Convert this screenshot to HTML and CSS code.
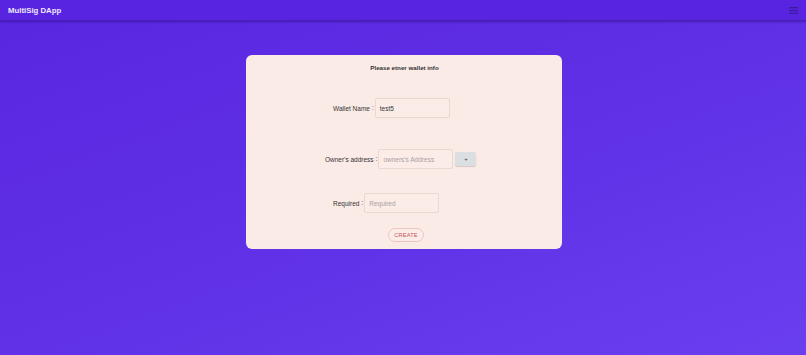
FILE: index.html
```html
<!DOCTYPE html>
<html>
<head>
<meta charset="utf-8">
<link rel="stylesheet" href="styles.css">
</head>
<body>
<header class="topbar">
  <div class="brand">MultiSig DApp</div>
  <svg class="menu" width="9" height="7" viewBox="0 0 9 7"><rect x="0" y="0" width="9" height="1.3" fill="#3b1c9c"/><rect x="0" y="2.85" width="9" height="1.3" fill="#3b1c9c"/><rect x="0" y="5.7" width="9" height="1.3" fill="#3b1c9c"/></svg>
</header>
<main class="stage">
  <section class="card">
    <h1 class="title">Please etner wallet info</h1>
    <div class="row row-name">
      <label class="label">Wallet Name</label><span class="colon">:</span>
      <div class="input"><span class="value">test5</span></div>
    </div>
    <div class="row row-owner">
      <label class="label">Owner's address</label><span class="colon">:</span>
      <div class="input"><span class="ph">owners's Address</span></div>
      <button class="plus">+</button>
    </div>
    <div class="row row-req">
      <label class="label">Required</label><span class="colon">:</span>
      <div class="input"><span class="ph">Required</span></div>
    </div>
    <div class="actions"><button class="create">CREATE</button></div>
  </section>
</main>
</body>
</html>
```
FILE: styles.css
```css
html, body { margin: 0; padding: 0; }
body {
  width: 806px; height: 355px; overflow: hidden;
  font-family: "Liberation Sans", Arial, sans-serif;
  background: linear-gradient(160deg, #5926e0 0%, #5f30e6 50%, #6a3ff0 100%);
}
.topbar {
  height: 20px;
  background: #5824e0;
  border-bottom: 1px solid #4a1cb8;
  box-shadow: 0 1px 2px rgba(40,10,120,0.5);
  display: flex; align-items: center; justify-content: space-between;
  padding: 0 8px 0 8px;
}
.brand { color: #efe8ff; font-weight: 700; font-size: 7.8px; }
.menu { display: block; }
.stage { padding-top: 34px; display: flex; justify-content: center; padding-left: 2px; }
.card {
  width: 316px; height: 194px; box-sizing: border-box;
  background: #fbebe7; border-radius: 6px;
  padding-top: 9px;
}
.title { margin: 0; text-align: center; font-size: 6.2px; font-weight: 700; color: #333; line-height: 8px; padding-left: 1px; }
.row { display: flex; align-items: center; height: 20px; font-size: 6.5px; color: #333; }
.row-name { margin-top: 26px; padding-left: 87px; }
.row-owner { margin-top: 31px; padding-left: 79px; }
.row-req { margin-top: 24px; padding-left: 87px; }
.colon { margin: 0 1px 0 2px; position: relative; top: -1px; font-size: 6.5px; }
.input {
  width: 75px; height: 20px; box-sizing: border-box;
  border: 1px solid #ebd8d3; border-radius: 2px;
  background: #fbece8;
  display: flex; align-items: center; padding-left: 4px;
}
.value { color: #333; font-size: 6.5px; }
.ph { color: #a8a0a0; font-size: 6.5px; }
.plus {
  margin-left: 2px; width: 21px; height: 14px; padding: 0;
  border: none; border-radius: 2px; background: #dcdfe1;
  box-shadow: 0 1px 1px rgba(0,0,0,0.15);
  font-size: 6px; color: #444; font-family: inherit; line-height: 14px;
}
.actions { display: flex; justify-content: center; margin-top: 15px; padding-left: 4px; }
.create {
  height: 14px; padding: 0 5px; border: 1px solid #eec5c5; border-radius: 7px;
  background: #fbece8; color: #c55555; font-size: 5.6px; font-family: inherit;
  letter-spacing: 0.2px; line-height: 12px;
}
```
